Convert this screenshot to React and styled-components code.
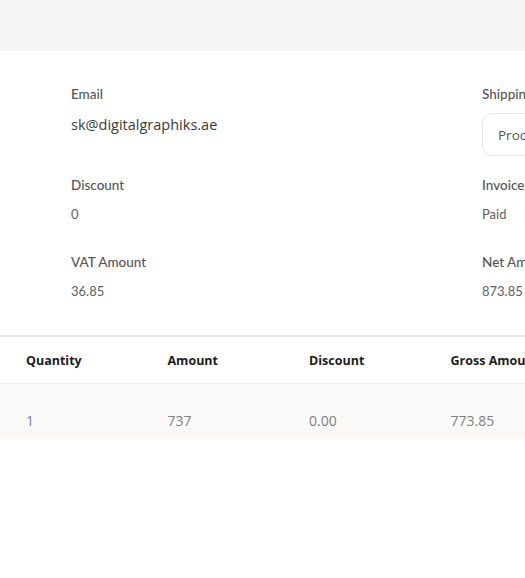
import styled, { createGlobalStyle } from "styled-components";

const GlobalStyle = createGlobalStyle`
  html, body {
    margin: 0;
    padding: 0;
    background: #ffffff;
    overflow: hidden;
  }
  body {
    font-family: "Lato", "Noto Sans", sans-serif;
  }
`;

const fields = [
  { label: "Email", value: "sk@digitalgraphiks.ae", big: true },
  { label: "Shipping Status", value: "Processing", select: true },
  { label: "Discount", value: "0" },
  { label: "Invoice Status", value: "Paid" },
  { label: "VAT Amount", value: "36.85" },
  { label: "Net Amount", value: "873.85" },
];

const columns = ["Quantity", "Amount", "Discount", "Gross Amount", "Total"];
const rows = [["1", "737", "0.00", "773.85", "773.85"]];

const App = () => {
  return (
    <Page>
      <GlobalStyle />
      <TopBar />
      <Details>
        {fields.map((f) => (
          <Field key={f.label}>
            <Label>{f.label}</Label>
            {f.select ? (
              <SelectBox>{f.value}</SelectBox>
            ) : (
              <Value $big={f.big}>{f.value}</Value>
            )}
          </Field>
        ))}
      </Details>
      <Table>
        <thead>
          <tr>
            {columns.map((c) => (
              <Th key={c}>{c}</Th>
            ))}
          </tr>
        </thead>
        <tbody>
          {rows.map((r, i) => (
            <BodyRow key={i}>
              {r.map((cell, j) => (
                <Td key={j}>{cell}</Td>
              ))}
            </BodyRow>
          ))}
        </tbody>
      </Table>
    </Page>
  );
};

const Page = styled.div`
  width: 800px;
`;

const TopBar = styled.div`
  height: 51px;
  background: #f4f4f4;
`;

const Details = styled.div`
  display: grid;
  grid-template-columns: 411px 300px;
  grid-template-rows: 91px 77px 77px;
  padding: 33px 0 6px 71px;
`;

const Field = styled.div`
  display: flex;
  flex-direction: column;
  align-items: flex-start;
`;

const Label = styled.div`
  font-size: 13.5px;
  line-height: 20px;
  font-weight: 500;
  color: #555555;
  margin-bottom: 8px;
  white-space: nowrap;
`;

const Value = styled.div`
  font-family: ${(p) => (p.$big ? '"Open Sans", sans-serif' : '"Lato", sans-serif')};
  font-size: ${(p) => (p.$big ? "14.5px" : "13px")};
  line-height: 22px;
  color: ${(p) => (p.$big ? "#3a3a3a" : "#606060")};
  ${(p) => (p.$big ? "margin-top: 2px;" : "")}
  white-space: nowrap;
`;

const SelectBox = styled.div`
  box-sizing: border-box;
  width: 260px;
  height: 43px;
  margin-top: 1px;
  display: flex;
  align-items: center;
  padding-left: 15px;
  border: 1px solid #e6e6e6;
  border-radius: 10px;
  font-family: "Open Sans", sans-serif;
  font-size: 13.5px;
  color: #555555;
`;

const Table = styled.table`
  border-collapse: collapse;
  width: 707.5px;
  table-layout: fixed;
  border-top: 2px solid #ebebeb;
`;

const Th = styled.th`
  text-align: left;
  padding: 0 0 0 26px;
  height: 46px;
  font-family: "Open Sans", sans-serif;
  font-size: 12.5px;
  font-weight: 700;
  color: #1c1c1c;
  border-bottom: 1px solid #eeeeee;
  white-space: nowrap;
`;

const BodyRow = styled.tr`
  background: #faf9f8;
`;

const Td = styled.td`
  padding: 18px 0 0 26px;
  height: 37px;
  font-family: "Open Sans", sans-serif;
  font-size: 14px;
  color: #808080;
`;

export default App;
